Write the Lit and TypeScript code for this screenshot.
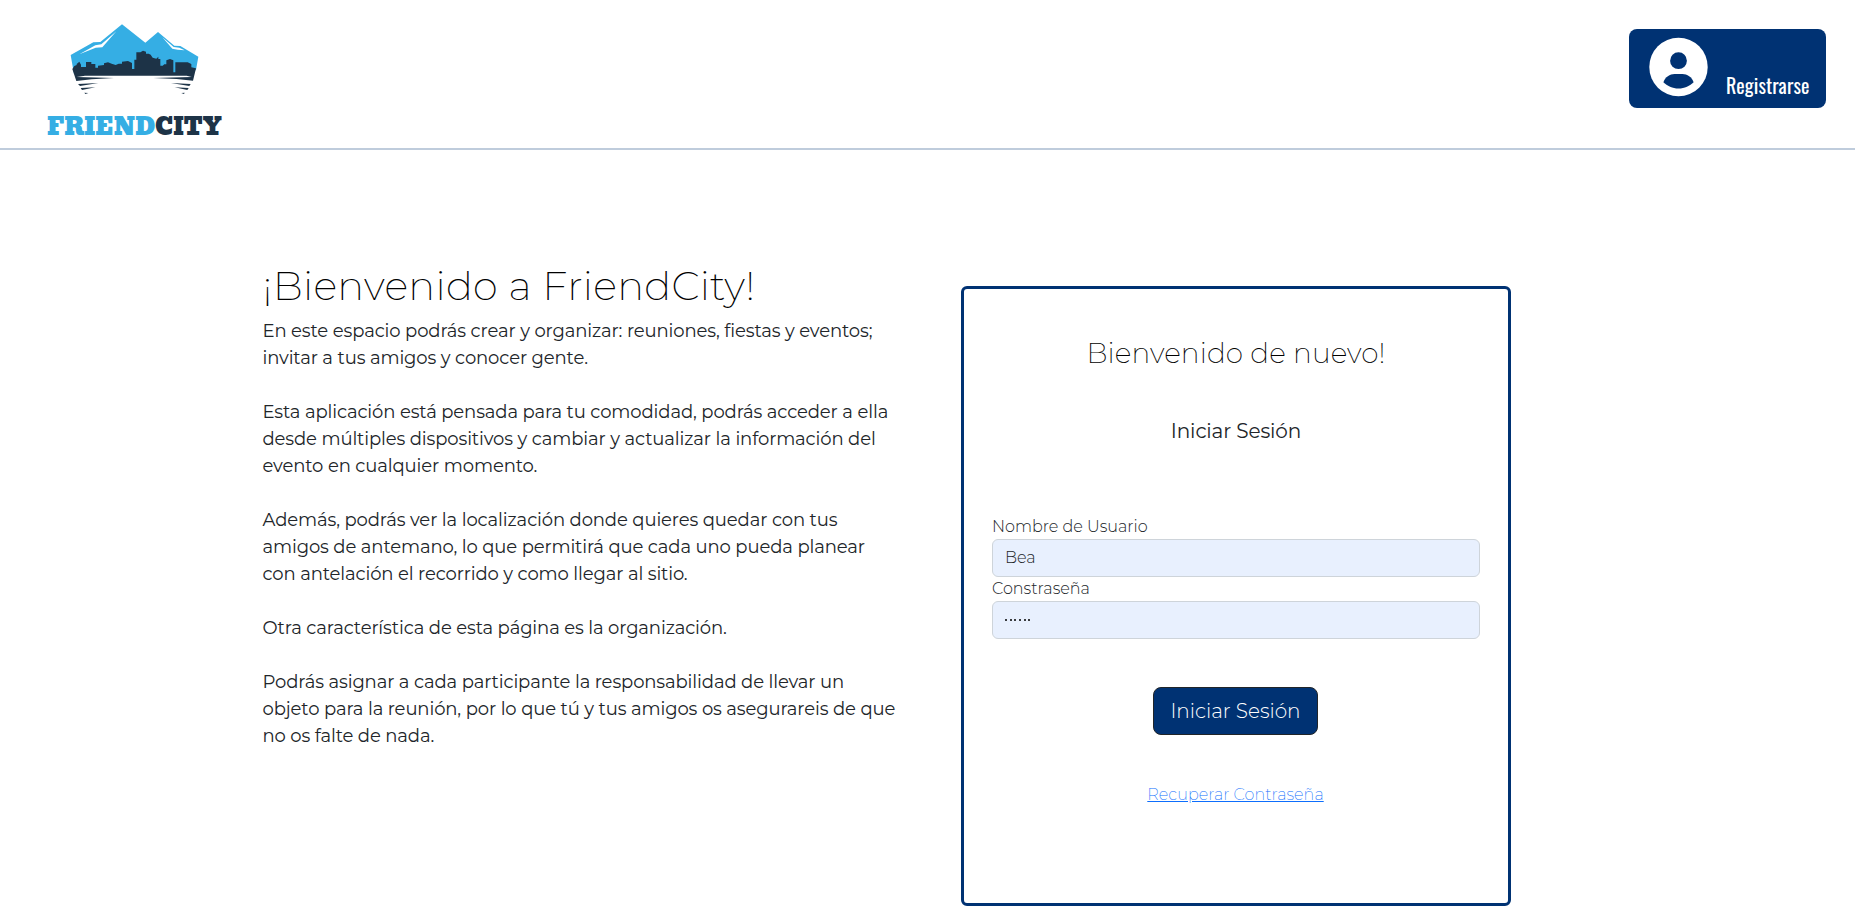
import { LitElement, html, css } from "lit";
import { customElement } from "lit/decorators.js";

const paragraphs: string[][] = [
  [
    "En este espacio podrás crear y organizar: reuniones, fiestas y eventos;",
    "invitar a tus amigos y conocer gente.",
  ],
  [
    "Esta aplicación está pensada para tu comodidad, podrás acceder a ella",
    "desde múltiples dispositivos y cambiar y actualizar la información del",
    "evento en cualquier momento.",
  ],
  [
    "Además, podrás ver la localización donde quieres quedar con tus",
    "amigos de antemano, lo que permitirá que cada uno pueda planear",
    "con antelación el recorrido y como llegar al sitio.",
  ],
  ["Otra característica de esta página es la organización."],
  [
    "Podrás asignar a cada participante la responsabilidad de llevar un",
    "objeto para la reunión, por lo que tú y tus amigos os asegurareis de que",
    "no os falte de nada.",
  ],
];

@customElement("city-header")
class CityHeader extends LitElement {
  static styles = css`
    :host {
      display: flex;
      justify-content: space-between;
      align-items: flex-start;
      box-sizing: border-box;
      height: 150px;
      padding: 10px 29px 0 40px;
      border-bottom: 2px solid #bfccdc;
    }
    .logo {
      display: block;
      width: 200px;
      height: 138px;
    }
    .brand {
      font-family: "Bevan", "Alfa Slab One", "DejaVu Serif", serif;
      font-weight: 400;
      font-size: 74px;
    }
    .register {
      display: flex;
      align-items: flex-end;
      box-sizing: border-box;
      width: 197px;
      height: 79px;
      margin-top: 19px;
      padding: 0 17px 7px 18px;
      gap: 15px;
      border: 0;
      border-radius: 8px;
      background: #003273;
      color: #fff;
      font: 400 20px/32px "Oswald", "Roboto", sans-serif;
      letter-spacing: 0.1px;
    }
    .avatar {
      flex: none;
      width: 64px;
      height: 64px;
      margin-bottom: 1px;
    }
  `;
  render() {
    return html`
      <svg class="logo" viewBox="0 0 600 414">
        <path fill="#35aee4" d="M92 135 L160 97 L181 96 L246 43 L316 98 L354 66 L403 107 L421 108 L475 140 L468 180 L440 192 H102 Z" />
        <path fill="#fff" d="M118 133 L166 106 L184 103 L229 64 L187 112 L167 113 Z" />
        <path fill="#fff" d="M367 82 L401 111 L418 113 L434 121 L413 119 L397 116 Z" />
        <path fill="#1d3347" d="M97 177 L103 168 L110 165 V162 L118 155 L123 164 V171 H138 V156 H154 V162 H166 V173 H174 V167 L192 165 V160 L204 157 L215 161 L227 165 L236 161 H246 V155 L264 153 L276 159 V177 H283 V149 H289 V127 H301 L309 122 L318 125 V131 H326 L332 134 L338 143 L349 146 L355 140 V147 H361 V167 H368 L373 163 H379 V151 L390 147 L400 151 V187 H406 V157 H443 L454 162 V172 L468 175 L459 212 L410 207 L340 204 L455 201 L440 197 H135 L110 201 L222 204 L155 208 L109 213 Z" />
        <g fill="#1d3347">
          <path d="M114 222 L175 219 L120 228 Z" />
          <path d="M122 234 L166 232 L126 240 Z" />
          <path d="M133 248 L145 249 L136 252 Z" />
          <path d="M452 222 L393 219 L448 228 Z" />
          <path d="M446 234 L404 232 L442 240 Z" />
          <path d="M434 248 L424 249 L432 252 Z" />
        </g>
        <text class="brand" x="21" y="374" textLength="325" lengthAdjust="spacingAndGlyphs" fill="#35aee4">FRIEND</text>
        <text class="brand" x="345" y="374" textLength="201" lengthAdjust="spacingAndGlyphs" fill="#1d3347">CITY</text>
      </svg>
      <button class="register">
        <svg class="avatar" viewBox="0 0 64 64">
          <circle cx="31.5" cy="31" r="29.2" fill="#fff" />
          <circle cx="31.5" cy="24.7" r="8.4" fill="#003273" />
          <path fill="#003273" d="M16.4 46.3 C18 41 23 38 27.5 38 H35.5 C40 38 45 41 46.6 46.3 C43 50 37.5 52.6 31.5 52.6 S20 50 16.4 46.3 Z" />
        </svg>
        <span>Registrarse</span>
      </button>
    `;
  }
}

@customElement("login-card")
class LoginCard extends LitElement {
  static styles = css`
    :host {
      display: flex;
      flex-direction: column;
      box-sizing: border-box;
      width: 550px;
      height: 620px;
      padding: 47px 28px 0;
      border: 3px solid #003273;
      border-radius: 6px;
      font-weight: 300;
      font-size: 16px;
      line-height: 24px;
    }
    .title {
      margin: 0;
      color: #000;
      font-weight: 200;
      font-size: 28px;
      line-height: 34px;
      letter-spacing: 0.1px;
      text-align: center;
    }
    .subtitle {
      margin: 49px 0 72px;
      font-weight: 400;
      font-size: 20px;
      line-height: 24px;
      letter-spacing: -0.12px;
      text-align: center;
    }
    .label {
      height: 24px;
    }
    .field {
      box-sizing: border-box;
      width: 488px;
      height: 38px;
      padding: 6px 12px;
      border: 1px solid #ced4da;
      border-radius: 6px;
      background: #e8f0fe;
      color: #212529;
      font: inherit;
    }
    .dots {
      display: flex;
      align-items: center;
      gap: 2.7px;
    }
    .dot {
      width: 2px;
      height: 2px;
      border-radius: 1px;
      background: #000;
    }
    .submit {
      align-self: center;
      box-sizing: border-box;
      width: 165px;
      height: 48px;
      margin: 48px 1px 0 0;
      padding: 0;
      border: 1px solid #212529;
      border-radius: 8px;
      background: #003273;
      color: #fff;
      font: inherit;
      font-size: 20px;
      line-height: 30px;
    }
    .recover {
      align-self: center;
      margin: 48px 1px 0 0;
      color: #0d6efd;
      font-weight: 200;
      letter-spacing: 0.06px;
      text-decoration: underline;
    }
  `;
  render() {
    return html`
      <h2 class="title">Bienvenido de nuevo!</h2>
      <div class="subtitle">Iniciar Sesión</div>
      <label class="label">Nombre de Usuario</label>
      <div class="field">Bea</div>
      <label class="label">Constraseña</label>
      <div class="field dots">${[1, 2, 3, 4, 5, 6].map(() => html`<i class="dot"></i>`)}</div>
      <button class="submit">Iniciar Sesión</button>
      <a class="recover">Recuperar Contraseña</a>
    `;
  }
}

@customElement("app-root")
class AppRoot extends LitElement {
  static styles = css`
    :host {
      display: block;
      height: 911px;
      overflow: hidden;
      background: #fff;
      color: #212529;
      font-family: "Montserrat", "Inter", sans-serif;
    }
    .main {
      display: flex;
      align-items: flex-start;
      padding: 112px 0 0 262.5px;
    }
    .intro {
      width: 698.5px;
    }
    .heading {
      margin: 0 0 8px;
      color: #000;
      font-weight: 200;
      font-size: 40px;
      line-height: 48px;
      letter-spacing: 0.29px;
    }
    .text {
      margin: 0 0 27px;
      font-size: 18px;
      line-height: 27px;
      letter-spacing: -0.115px;
      white-space: nowrap;
    }
    .card {
      margin-top: 24px;
    }
  `;
  render() {
    return html`
      <city-header></city-header>
      <main class="main">
        <section class="intro">
          <h1 class="heading">¡Bienvenido a FriendCity!</h1>
          ${paragraphs.map(
            (lines) => html`<p class="text">${lines.map((line, i) => html`${i ? html`<br />` : ""}${line}`)}</p>`,
          )}
        </section>
        <login-card class="card"></login-card>
      </main>
    `;
  }
}
